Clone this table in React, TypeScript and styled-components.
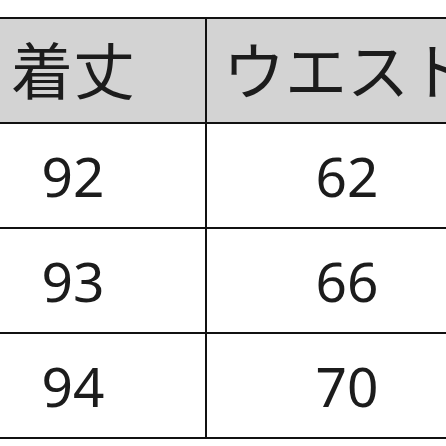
import React from "react";
import styled, { createGlobalStyle } from "styled-components";

const GlobalStyle = createGlobalStyle`
  html, body {
    margin: 0;
    padding: 0;
    background: #ffffff;
    overflow: hidden;
  }
`;

const Page = styled.div`
  width: 446px;
  height: 446px;
  overflow: hidden;
  padding-top: 17px;
  box-sizing: border-box;
`;

const Grid = styled.div`
  display: grid;
  grid-template-columns: 266px 282px;
  margin-left: -59px;
  border-top: 2px solid #111111;
  width: max-content;
`;

const Cell = styled.div<{ $head?: boolean }>`
  box-sizing: border-box;
  height: 105px;
  border-right: 2px solid #111111;
  border-bottom: 2px solid #111111;
  background: ${(p) => (p.$head ? "#d3d3d3" : "#ffffff")};
  color: #1c1c1c;
  display: flex;
  align-items: center;
  justify-content: center;
  white-space: nowrap;
  font-family: "Noto Sans", "Noto Sans CJK JP", sans-serif;
  font-size: ${(p) => (p.$head ? "62px" : "55px")};
  line-height: 1;
`;

const header = ["着丈", "ウエスト"];
const rows = [
  ["92", "62"],
  ["93", "66"],
  ["94", "70"],
];

export default function App() {
  return (
    <>
      <GlobalStyle />
      <Page>
        <Grid>
          {header.map((h) => (
            <Cell key={h} $head>
              {h}
            </Cell>
          ))}
          {rows.map((r, i) =>
            r.map((v, j) => <Cell key={`${i}-${j}`}>{v}</Cell>)
          )}
        </Grid>
      </Page>
    </>
  );
}
